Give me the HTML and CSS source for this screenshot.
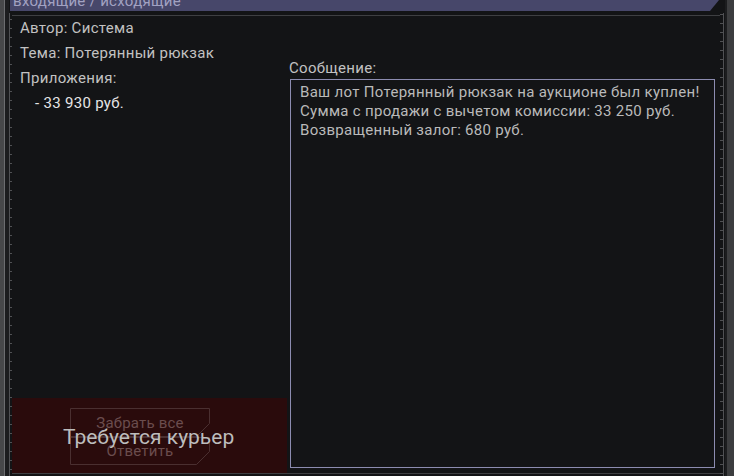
FILE: index.html
```html
<!DOCTYPE html>
<html lang="ru">
<head>
    <meta charset="UTF-8">
    <title>Почта</title>
    <link rel="stylesheet" href="styles.css">
</head>
<body>
    <div class="window">
        <div class="rail-left"></div>
        <div class="panel">
            <div class="tabs"><span>входящие / исходящие</span></div>
            <div class="body">
                <div class="ruler ruler-left"></div>
                <div class="inner">
                    <div class="meta">
                        <p class="line">Автор: Система</p>
                        <p class="line">Тема: Потерянный рюкзак</p>
                        <p class="line">Приложения:</p>
                        <p class="line attach">- 33 930 руб.</p>

                        <div class="courier">
                            <div class="btn">
                                <svg viewBox="0 0 140 29" preserveAspectRatio="none"><path d="M0.5 0.5 H139.5 V15.5 L126.5 28.5 H0.5 Z"/></svg>
                                <span>Забрать все</span>
                            </div>
                            <div class="btn">
                                <svg viewBox="0 0 140 28" preserveAspectRatio="none"><path d="M0.5 0.5 H139.5 V14.5 L126.5 27.5 H0.5 Z"/></svg>
                                <span>Ответить</span>
                            </div>
                            <div class="courier-note">Требуется курьер</div>
                        </div>
                    </div>
                    <div class="message">
                        <p class="msg-label">Сообщение:</p>
                        <div class="msg-box">
                            Ваш лот Потерянный рюкзак на аукционе был куплен!<br>
                            Сумма с продажи с вычетом комиссии: 33 250 руб.<br>
                            Возвращенный залог: 680 руб.
                        </div>
                    </div>
                </div>
                <div class="ruler ruler-right"></div>
            </div>
        </div>
        <div class="rail-right"></div>
    </div>
</body>
</html>
```

FILE: styles.css
```css
body {
    margin: 0;
    background: #3b3c3e;
    font-family: Roboto, "Liberation Sans", Arial, sans-serif;
    font-size: 15px;
    letter-spacing: 0.3px;
    color: #c2c2c2;
}

p {
    margin: 0;
}

.window {
    display: flex;
    width: 734px;
    height: 476px;
    overflow: hidden;
}

.rail-left {
    width: 9px;
    background: linear-gradient(to right, #47484a 0 4px, #6c6d70 4px 5px, #1c1d1f 5px 9px);
}

.rail-right {
    width: 9px;
    background: linear-gradient(to right, #1c1d1f 0 2px, #3c3d3f 2px);
}

.panel {
    flex: 1;
    display: flex;
    flex-direction: column;
    background: #131416;
}

.tabs {
    height: 11px;
    width: 709px;
    margin-left: 1px;
    overflow: hidden;
    background: #47476a;
    clip-path: polygon(0 0, 100% 0, calc(100% - 9px) 100%, 0 100%);
}

.tabs span {
    display: block;
    margin-top: -8px;
    padding-left: 3px;
    line-height: 18px;
    color: #a2a2c2;
}

.body {
    flex: 1;
    display: flex;
    margin-top: 2px;
}

.ruler {
    width: 4px;
    background-repeat: no-repeat;
}

.ruler-left {
    width: 3px;
    background-image: linear-gradient(#505154, #505154),
        repeating-linear-gradient(to bottom, transparent 0 6px, #505154 6px 7px, transparent 7px 9px);
    background-size: 1px 100%, 3px 100%;
    background-position: left top, left top;
}

.ruler-right {
    width: 5px;
    background-image: linear-gradient(#505154, #505154),
        repeating-linear-gradient(to bottom, transparent 0 1px, #505154 1px 2px, transparent 2px 9px);
    background-size: 1px 100%, 4px 100%;
    background-position: 3px top, 0 top;
}

.inner {
    flex: 1;
    display: flex;
    margin-top: 2px;
    border-top: 1px solid #3e3f42;
    border-bottom: 1px solid #3e3f42;
    margin-bottom: 2px;
}

.meta {
    width: 275px;
    display: flex;
    flex-direction: column;
}

.line {
    padding-left: 8px;
    line-height: 25px;
}

.attach {
    padding-left: 23px;
    line-height: 24px;
    color: #e6e6e6;
}

.courier {
    position: relative;
    margin-top: auto;
    height: 75px;
    padding: 10px 0 0 58px;
    box-sizing: border-box;
    background: #2a0b0c;
}

.btn {
    position: relative;
    width: 140px;
    height: 29px;
    display: flex;
    align-items: center;
    justify-content: center;
    letter-spacing: 0.2px;
    color: #6b4d4e;
}

.btn + .btn {
    height: 28px;
}

.btn svg {
    position: absolute;
    inset: 0;
    width: 100%;
    height: 100%;
    fill: none;
    stroke: #4a2f30;
    stroke-width: 1;
}

.btn span {
    position: relative;
}

.courier-note {
    position: absolute;
    left: 51px;
    top: 26px;
    font-size: 21px;
    line-height: 26px;
    letter-spacing: 0;
    color: #bdbdbd;
}

.message {
    flex: 1;
    display: flex;
    flex-direction: column;
    padding: 43px 5px 5px 2px;
}

.msg-label {
    line-height: 19px;
    margin-bottom: 1px;
}

.msg-box {
    flex: 1;
    margin-left: 1px;
    padding: 3px 9px;
    border: 1px solid #8c8cb0;
    line-height: 19px;
    color: #bababa;
}
```
